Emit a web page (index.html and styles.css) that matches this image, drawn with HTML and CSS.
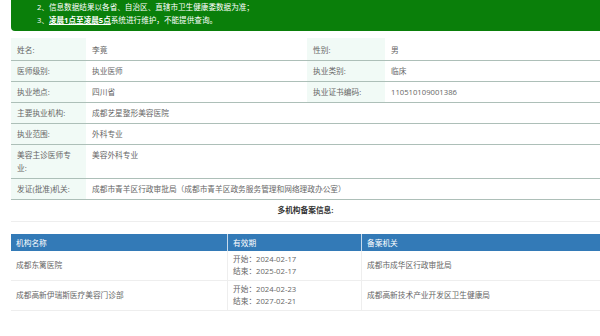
FILE: index.html
```html
<!DOCTYPE html>
<html lang="zh-CN">
<head>
<meta charset="utf-8">
<title>医师信息</title>
<link rel="stylesheet" href="styles.css">
</head>
<body>
<div class="page">
  <div class="notice">
    <p>2、信息数据结果以各省、自治区、直辖市卫生健康委数据为准；</p>
    <p>3、<b class="hl">凌晨1点至凌晨5点</b>系统进行维护，不能提供查询。</p>
  </div>

  <div class="info">
    <div class="lbl">姓名:</div><div class="val">李竟</div>
    <div class="lbl">性别:</div><div class="val">男</div>

    <div class="lbl">医师级别:</div><div class="val">执业医师</div>
    <div class="lbl">执业类别:</div><div class="val">临床</div>

    <div class="lbl">执业地点:</div><div class="val">四川省</div>
    <div class="lbl">执业证书编码:</div><div class="val">110510109001386</div>

    <div class="lbl">主要执业机构:</div><div class="val wide">成都艺星整形美容医院</div>

    <div class="lbl">执业范围:</div><div class="val wide">外科专业</div>

    <div class="lbl tall">美容主诊医师专业:</div><div class="val wide tall">美容外科专业</div>

    <div class="lbl">发证(批准)机关:</div><div class="val wide">成都市青羊区行政审批局（成都市青羊区政务服务管理和网络理政办公室）</div>

    <div class="multi">多机构备案信息:</div>
  </div>

  <table class="orgs">
    <thead>
      <tr><th class="c1">机构名称</th><th class="c2">有效期</th><th>备案机关</th></tr>
    </thead>
    <tbody>
      <tr>
        <td>成都东篱医院</td>
        <td>开始：2024-02-17<br>结束：2025-02-17</td>
        <td>成都市成华区行政审批局</td>
      </tr>
      <tr>
        <td>成都高新伊瑞斯医疗美容门诊部</td>
        <td>开始：2024-02-23<br>结束：2027-02-21</td>
        <td>成都高新技术产业开发区卫生健康局</td>
      </tr>
    </tbody>
  </table>
</div>
</body>
</html>
```
FILE: styles.css
```css
html, body {
  margin: 0;
  padding: 0;
  background: #fff;
  overflow: hidden;
}
body {
  width: 600px;
  height: 336px;
  font-family: "Open Sans", "Noto Sans CJK SC", sans-serif;
  font-size: 7.7px;
  color: #666;
}
.page {
  padding-left: 11px;
}
.notice {
  background: #0a7f0a;
  color: #fff;
  border-bottom-left-radius: 4px;
  padding: 1px 0 5px 26px;
  font-size: 7.6px;
}
.notice p {
  margin: 0;
  line-height: 12.5px;
}
.notice .hl {
  text-decoration: underline;
}
.info {
  margin-top: 7px;
  display: grid;
  grid-template-columns: 75px 221px 78px 215px;
}
.lbl, .val {
  border-bottom: 1px solid #adbfb8;
  padding: 0 6px;
  line-height: 12.5px;
  min-height: 20px;
  display: flex;
  align-items: center;
}
.lbl {
  background: #f1faf6;
  padding-right: 8px;
}
.info > .lbl:first-child,
.info > .lbl:first-child + .val,
.info > .lbl:first-child + .val + .lbl,
.info > .lbl:first-child + .val + .lbl + .val {
  padding-top: 2px;
}
.wide {
  grid-column: span 3;
}
.tall {
  align-items: flex-start;
  padding-top: 4px;
  padding-bottom: 4px;
  min-height: 25px;
}
.multi {
  grid-column: 1 / -1;
  text-align: center;
  font-weight: bold;
  color: #333;
  line-height: 21px;
  border-bottom: 1px solid #eee;
}
.orgs {
  margin-top: 12px;
  width: 589px;
  border-collapse: collapse;
  table-layout: fixed;
}
.orgs th {
  background: #337ab7;
  color: #fff;
  font-weight: normal;
  text-align: left;
  height: 17px;
  padding: 0 5px;
  line-height: 12px;
  border-right: 1px solid #c9dbec;
}
.orgs th:last-child,
.orgs td:last-child {
  border-right: none;
}
.orgs .c1 { width: 206px; }
.orgs .c2 { width: 123px; }
.orgs td {
  height: 29px;
  padding: 0 5px;
  line-height: 11.5px;
  border-bottom: 1px solid #eee;
  border-right: 1px solid #eee;
  vertical-align: middle;
}
```
